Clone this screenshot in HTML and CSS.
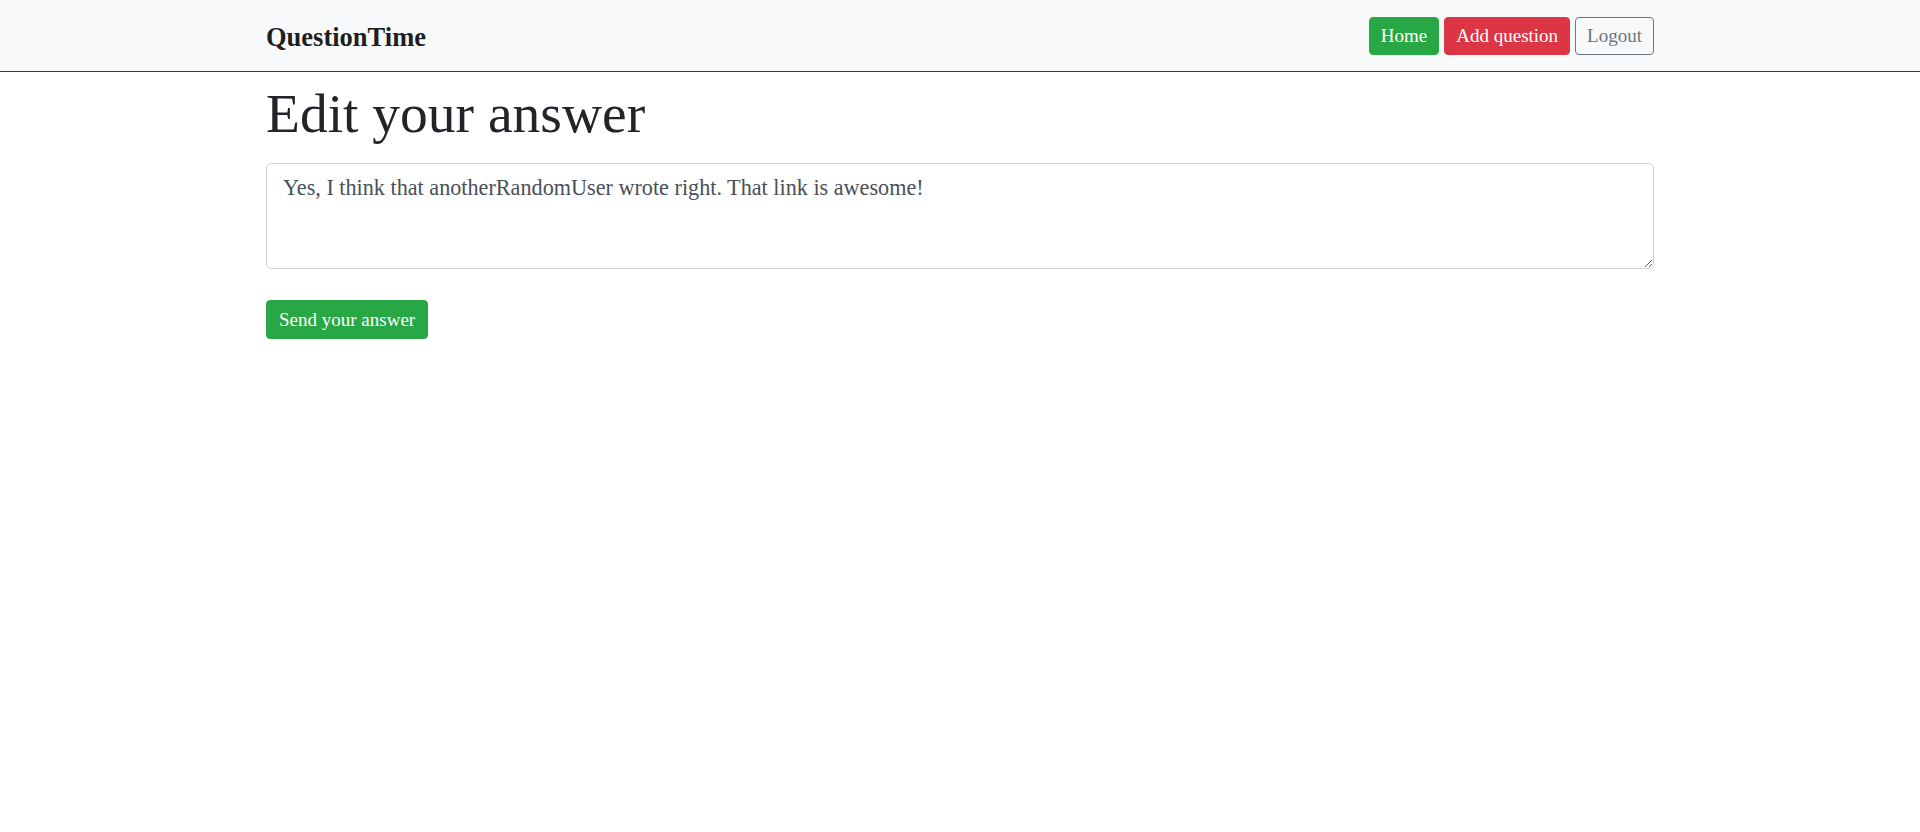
FILE: index.html
```html
<!DOCTYPE html>
<html lang="en">
<head>
<meta charset="utf-8">
<title>QuestionTime - Edit your answer</title>
<link rel="stylesheet" href="styles.css">
</head>
<body>
<nav class="navbar">
  <div class="container nav-inner">
    <a class="brand" href="#">QuestionTime</a>
    <div class="nav-actions">
      <a class="btn btn-success" href="#">Home</a>
      <a class="btn btn-danger" href="#">Add question</a>
      <a class="btn btn-outline" href="#">Logout</a>
    </div>
  </div>
</nav>
<main class="container">
  <h1 class="title">Edit your answer</h1>
  <form class="answer-form">
    <textarea class="answer-input" rows="3">Yes, I think that anotherRandomUser wrote right. That link is awesome!</textarea>
    <button type="button" class="btn btn-success send-btn">Send your answer</button>
  </form>
</main>
</body>
</html>
```
FILE: styles.css
```css
* { box-sizing: border-box; }

html, body {
  margin: 0;
  padding: 0;
  background: #ffffff;
  font-family: "Liberation Serif", "Times New Roman", serif;
  color: #212529;
}

.container {
  width: 1388px;
  margin: 0 auto;
}

.navbar {
  background: #f8f9fa;
  border-bottom: 1px solid #343a40;
  height: 72px;
}

.nav-inner {
  height: 71px;
  display: flex;
  align-items: center;
  justify-content: space-between;
}

.brand {
  font-size: 26.5px;
  font-weight: 700;
  line-height: 36px;
  padding-top: 2px;
  color: rgba(0, 0, 0, 0.9);
  text-decoration: none;
}

.nav-actions {
  display: flex;
  gap: 5px;
}

.btn {
  display: inline-block;
  font-family: "Liberation Serif", "Times New Roman", serif;
  font-size: 19px;
  line-height: 26px;
  height: 38px;
  padding: 5px 11px;
  border: 1px solid transparent;
  border-radius: 4px;
  text-decoration: none;
  cursor: pointer;
}

.btn-success {
  background: #28a745;
  border-color: #28a745;
  color: #ffffff;
}

.btn-danger {
  background: #dc3545;
  border-color: #dc3545;
  color: #ffffff;
}

.btn-outline {
  background: transparent;
  border-color: #6c757d;
  color: #6c757d;
}

.title {
  margin: 9px 0 16px;
  font-size: 55.5px;
  line-height: 66px;
  font-weight: 400;
  color: #212529;
}

.answer-form {
  display: flex;
  flex-direction: column;
  align-items: flex-start;
}

.answer-input {
  display: block;
  width: 100%;
  height: 106px;
  padding: 9px 16px 5px;
  font-family: "Liberation Serif", "Times New Roman", serif;
  font-size: 22.2px;
  line-height: 30px;
  color: #495057;
  background: #ffffff;
  border: 1px solid #ced4da;
  border-radius: 5px;
  margin: 0;
}

.send-btn {
  margin-top: 31px;
  padding: 5px 12px;
  height: 39px;
}
```
